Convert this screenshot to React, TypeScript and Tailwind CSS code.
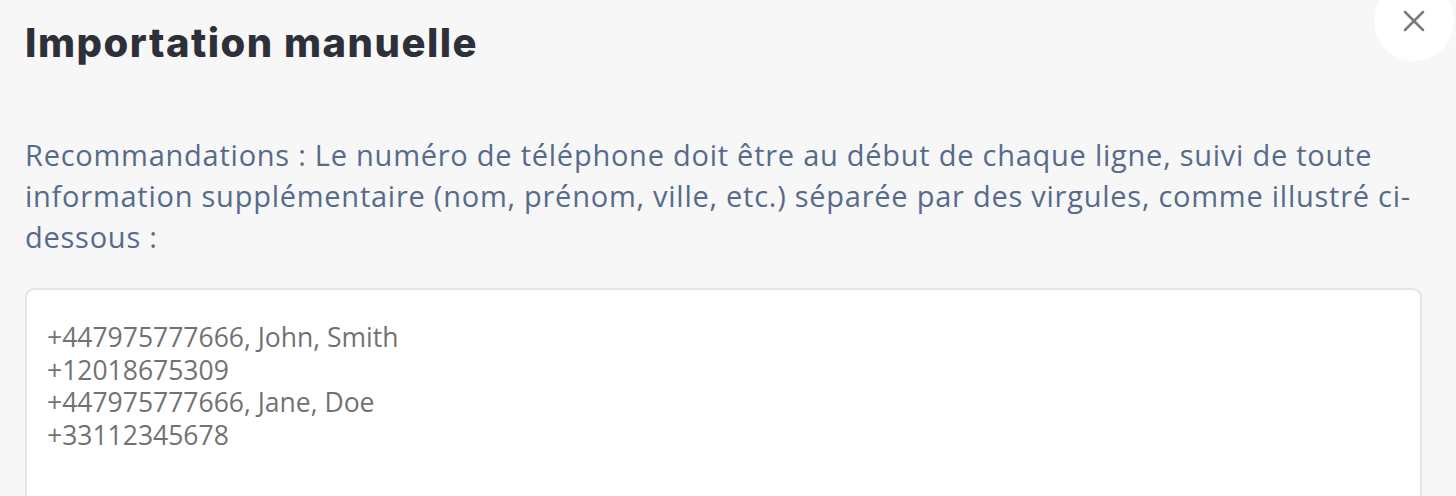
import { X } from "lucide-react";

const sample = `+447975777666, John, Smith
+12018675309
+447975777666, Jane, Doe
+33112345678`;

export default function App() {
  return (
    <div className="relative h-[496px] w-full overflow-hidden bg-[#f7f7f7]">
      {/* bouton fermer */}
      <button
        type="button"
        aria-label="Fermer"
        className="absolute right-[2px] top-[-19px] flex h-[80px] w-[80px] items-center justify-center rounded-full bg-white text-[#7a7a7a]"
      >
        <X size={36} strokeWidth={1.7} />
      </button>

      <div className="flex flex-col pl-[25px] pr-[34px] pt-[18px]">
        <h1 className="font-['Inter',sans-serif] text-[40px] font-extrabold leading-[50px] tracking-[1.5px] text-[#2e3039]">
          Importation manuelle
        </h1>

        <p className="mt-[66px] font-['Open_Sans',sans-serif] text-[29px] leading-[41px] tracking-[0.75px] text-[#566b8c]">
          Recommandations : Le numéro de téléphone doit être au début de chaque ligne, suivi de toute information
          supplémentaire (nom, prénom, ville, etc.) séparée par des virgules, comme illustré ci-dessous :
        </p>

        <div className="mt-[31px] h-[260px] rounded-[9px] border-2 border-[#e4e4e4] bg-white px-[20px] pt-[31px]">
          <pre className="font-['Open_Sans',sans-serif] text-[26.5px] leading-[32.5px] text-[#727272]">{sample}</pre>
        </div>
      </div>
    </div>
  );
}
